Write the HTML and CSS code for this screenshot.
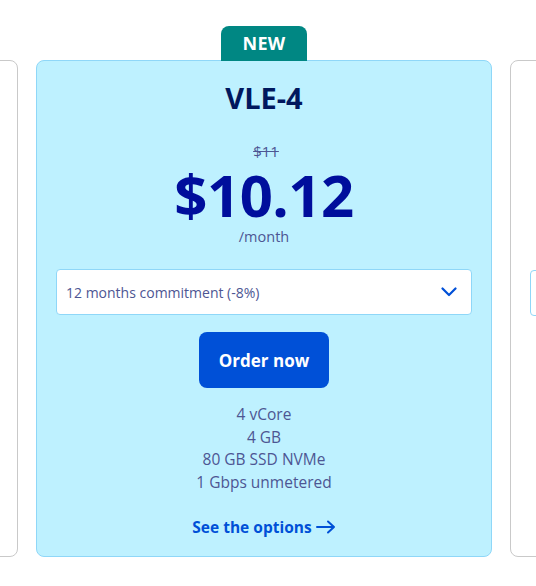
FILE: index.html
```html
<!DOCTYPE html>
<html lang="en">
<head>
<meta charset="utf-8">
<title>VLE-4</title>
<link rel="stylesheet" href="styles.css">
</head>
<body>
<div class="row">
  <div class="card card-plain"></div>
  <div class="card card-featured">
    <span class="badge">NEW</span>
    <h2 class="title">VLE-4</h2>
    <div class="old-price">$11</div>
    <div class="price">$10.12</div>
    <div class="period">/month</div>
    <div class="select">
      <span>12 months commitment (-8%)</span>
      <svg class="chevron" width="16" height="10" viewBox="0 0 16 10"><polyline points="1.5,1.5 8,8 14.5,1.5" fill="none" stroke="#0050d7" stroke-width="2.2" stroke-linecap="round" stroke-linejoin="round"/></svg>
    </div>
    <button class="order">Order now</button>
    <ul class="specs">
      <li>4 vCore</li>
      <li>4 GB</li>
      <li>80 GB SSD NVMe</li>
      <li>1 Gbps unmetered</li>
    </ul>
    <a class="options" href="#">See the options <svg width="20" height="14" viewBox="0 0 20 14"><path d="M1 7H18M12 1.5L18 7L12 12.5" fill="none" stroke="#0050d7" stroke-width="2" stroke-linecap="round" stroke-linejoin="round"/></svg></a>
  </div>
  <div class="card card-plain">
    <div class="select select-stub"></div>
  </div>
</div>
</body>
</html>
```
FILE: styles.css
```css
* { box-sizing: border-box; }
html, body { margin: 0; padding: 0; background: #fff; overflow: hidden; }
body { font-family: "Open Sans", "Noto Sans", sans-serif; color: #4d5693; }

.row {
  display: flex;
  gap: 18px;
  padding-top: 60px;
  margin-left: -438px;
}

.card {
  flex: 0 0 456px;
  width: 456px;
  height: 497px;
  border-radius: 8px;
  border: 1px solid #c9c9c9;
  background: #fff;
  display: flex;
  flex-direction: column;
  align-items: center;
  padding: 0 19px;
}

.card-featured {
  position: relative;
  background: #bef1ff;
  border-color: #8fd7f8;
}

.badge {
  position: absolute;
  top: -35px;
  left: 184px;
  width: 86px;
  height: 35px;
  background: #008783;
  color: #fff;
  font-weight: 700;
  font-size: 18px;
  line-height: 35px;
  text-align: center;
  border-radius: 8px 8px 0 0;
  letter-spacing: 0.3px;
}

.title {
  margin: 19px 0 0;
  font-size: 29px;
  line-height: 36px;
  font-weight: 700;
  color: #00185e;
}

.old-price {
  margin-top: 25px;
  padding-left: 4px;
  font-size: 15px;
  line-height: 20px;
  text-decoration: line-through;
  color: #4d5693;
}

.price {
  margin-top: 4px;
  font-size: 58px;
  line-height: 60px;
  font-weight: 700;
  color: #000e9c;
  letter-spacing: -0.5px;
}

.period {
  margin-top: 2px;
  font-size: 14.5px;
  line-height: 20px;
}

.select {
  margin-top: 22px;
  width: 100%;
  flex: 0 0 46px;
  height: 46px;
  background: #fff;
  border: 1px solid #8fd7f8;
  border-radius: 4px;
  display: flex;
  align-items: center;
  justify-content: space-between;
  padding: 0 14px 0 9px;
  font-size: 14px;
}

.chevron { display: block; }

.select-stub { margin-top: 209px; }

.order {
  margin-top: 17px;
  width: 130px;
  flex: 0 0 56px;
  height: 56px;
  border: 0;
  border-radius: 8px;
  background: #0050d7;
  color: #fff;
  font-family: inherit;
  font-size: 17px;
  font-weight: 700;
}

.specs {
  list-style: none;
  margin: 15px 0 0;
  padding: 0;
  text-align: center;
  font-size: 15.5px;
  line-height: 22.6px;
}

.options {
  margin-top: 22px;
  display: flex;
  align-items: center;
  gap: 4px;
  font-size: 15.5px;
  line-height: 24px;
  font-weight: 700;
  color: #0050d7;
  text-decoration: none;
}
.options svg { display: block; }
```
